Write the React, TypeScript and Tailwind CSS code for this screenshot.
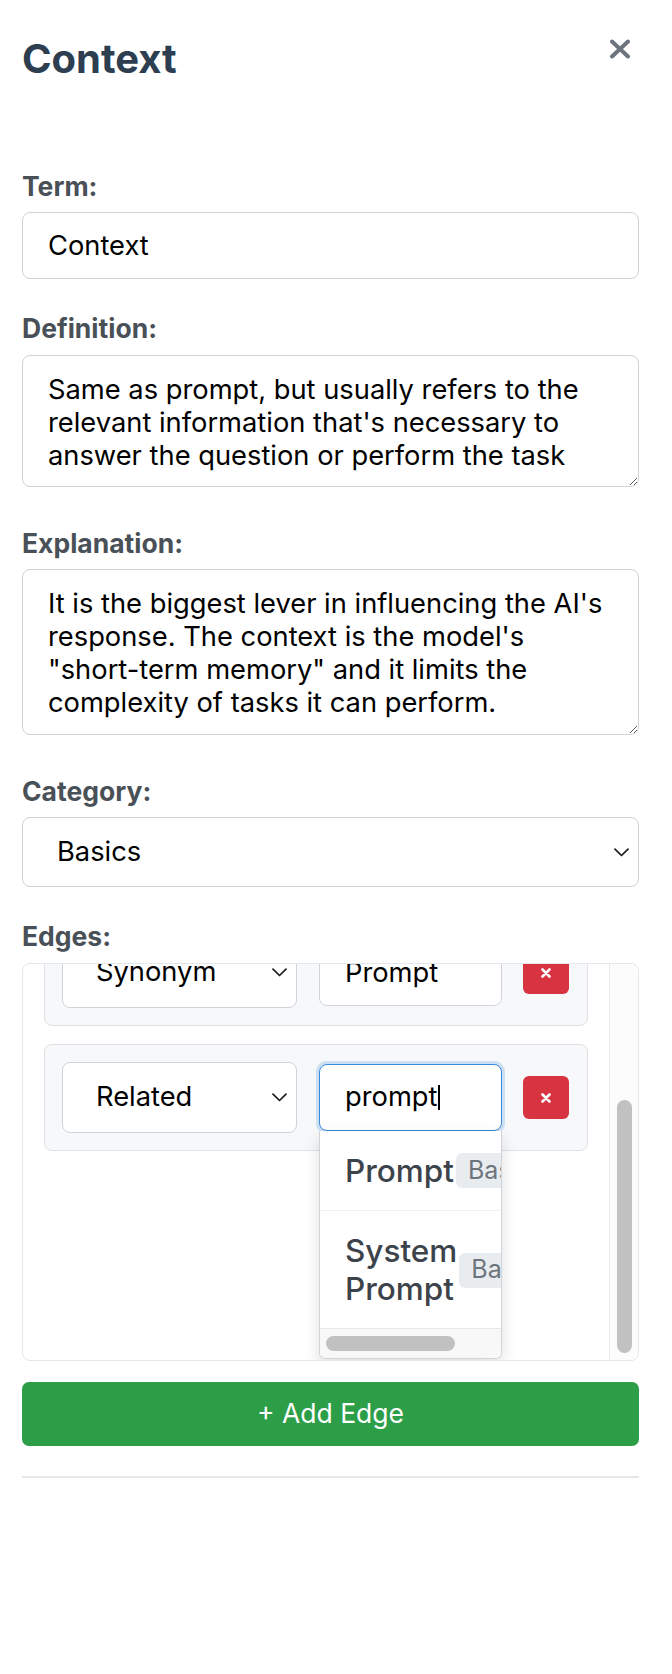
import React from "react";

const Chevron = () => (
  <svg width="15" height="9" viewBox="0 0 15 9" fill="none" className="shrink-0">
    <path d="M1 1.2l6.5 6.3L14 1.2" stroke="#1c1c1c" strokeWidth="1.7" strokeLinecap="round" strokeLinejoin="round" />
  </svg>
);

const SmallX = () => (
  <svg width="10" height="10" viewBox="0 0 10 10" fill="none">
    <path d="M1.5 1.5l7 7M8.5 1.5l-7 7" stroke="#ffffff" strokeWidth="2.6" strokeLinecap="round" />
  </svg>
);

function Label({ children }: { children: React.ReactNode }) {
  return <div className="h-[30px] text-[26.5px] leading-[30px] font-bold text-[#495057]">{children}</div>;
}

function EdgeSelect({ value }: { value: string }) {
  return (
    <div className="w-[235px] h-[71px] shrink-0 bg-white border border-[#ced4da] rounded-[8px] flex items-center justify-between pl-[33px] pr-[9px] text-[27.3px] text-black">
      <span>{value}</span>
      <Chevron />
    </div>
  );
}

function DeleteBtn() {
  return (
    <button className="w-[46px] h-[43px] shrink-0 rounded-[6px] bg-[#d73341] flex items-center justify-center">
      <SmallX />
    </button>
  );
}

function Badge() {
  return (
    <span className="ml-[2px] shrink-0 whitespace-nowrap h-[35px] px-[12px] rounded-[6px] bg-[#e9ecef] text-[#6c757d] text-[25px] flex items-center">
      Basics
    </span>
  );
}

export default function App() {
  return (
    <div className="w-[672px] min-h-[1674px] bg-white pl-[22px] pr-[33px] pt-[36px] font-[Inter,sans-serif]">
      <div className="flex justify-between items-start">
        <h2 className="text-[40px] leading-[46px] font-bold text-[#2c3e50]">Context</h2>
        <button className="mt-[3px] mr-[8px]">
          <svg width="22" height="20" viewBox="0 0 22 20" fill="none">
            <path d="M3 2.5l16 15M19 2.5l-16 15" stroke="#6c757d" strokeWidth="4" strokeLinecap="round" />
          </svg>
        </button>
      </div>

      <div className="mt-[89px]">
        <Label>Term:</Label>
        <input
          readOnly
          value="Context"
          className="mt-[11px] block w-full h-[67px] border border-[#ced4da] rounded-[8px] pl-[25px] text-[27.3px] text-black outline-none"
        />
      </div>

      <div className="mt-[34px]">
        <Label>Definition:</Label>
        <textarea
          readOnly
          defaultValue="Same as prompt, but usually refers to the relevant information that's necessary to answer the question or perform the task"
          className="mt-[12px] block w-full h-[132px] border border-[#ced4da] rounded-[8px] pl-[25px] pr-[25px] pt-[17px] text-[27.3px] leading-[33px] text-black outline-none"
        />
      </div>

      <div className="mt-[41px]">
        <Label>Explanation:</Label>
        <textarea
          readOnly
          defaultValue={'It is the biggest lever in influencing the AI\'s response. The context is the model\'s "short-term memory" and it limits the complexity of tasks it can perform.'}
          className="mt-[11px] block w-full h-[166px] border border-[#ced4da] rounded-[8px] pl-[25px] pr-[25px] pt-[17px] text-[27.3px] leading-[33px] text-black outline-none"
        />
      </div>

      <div className="mt-[41px]">
        <Label>Category:</Label>
        <div className="mt-[11px] h-[70px] border border-[#ced4da] rounded-[8px] flex items-center justify-between pl-[34px] pr-[9px] text-[27.3px] text-black">
          <span>Basics</span>
          <Chevron />
        </div>
      </div>

      <div className="mt-[34px]">
        <Label>Edges:</Label>
        <div className="mt-[12px] h-[398px] border border-[#e3e6ea] rounded-[8px] flex overflow-hidden">
          <div className="flex-1 overflow-hidden">
            <div className="-mt-[66px] pt-[21px] pl-[21px] pr-[21px] flex flex-col gap-[18px]">
              <div className="h-[107px] bg-[#f7f8fa] border border-[#dde1e5] rounded-[8px] px-[17px] flex items-center">
                <EdgeSelect value="Synonym" />
                <input
                  readOnly
                  value="Prompt"
                  className="ml-[22px] w-[183px] h-[67px] shrink-0 bg-white border border-[#ced4da] rounded-[8px] pl-[25px] text-[27.3px] text-black outline-none"
                />
                <div className="ml-[21px]">
                  <DeleteBtn />
                </div>
              </div>
              <div className="h-[107px] bg-[#f7f8fa] border border-[#dde1e5] rounded-[8px] px-[17px] flex items-center">
                <EdgeSelect value="Related" />
                <div className="ml-[22px] relative w-[183px] h-[67px] shrink-0">
                  <div className="w-full h-full bg-white border-[1.5px] border-[#3a8ad8] rounded-[8px] shadow-[0_0_0_3px_rgba(58,138,216,0.22)] flex items-center pl-[25px] text-[27.3px] text-black">
                    <span>prompt</span>
                    <span className="ml-[1px] w-[1.5px] h-[25px] bg-black" />
                  </div>
                  <div className="absolute left-0 top-full z-10 w-[183px] h-[228px] bg-white border border-t-0 border-[#ced4da] rounded-b-[6px] shadow-[0_6px_16px_rgba(0,0,0,0.13)] flex flex-col overflow-hidden">
                    <div className="overflow-hidden">
                      <div className="h-[80px] flex items-center pl-[25px] border-b border-[#f0f1f2]">
                        <span className="text-[31.5px] leading-[38px] font-medium text-[#3d434a]">Prompt</span>
                        <Badge />
                      </div>
                      <div className="h-[118px] flex items-center pl-[25px]">
                        <span className="text-[31.5px] leading-[38px] font-medium text-[#3d434a]">System Prompt</span>
                        <Badge />
                      </div>
                    </div>
                    <div className="h-[30px] border-t border-[#e6e6e6] bg-[#f8f8f8] pl-[6px] pt-[7px]">
                      <div className="w-[129px] h-[15px] rounded-full bg-[#c1c1c1]" />
                    </div>
                  </div>
                </div>
                <div className="ml-[21px]">
                  <DeleteBtn />
                </div>
              </div>
            </div>
          </div>
          <div className="w-[29px] shrink-0 border-l border-[#e8e8e8] bg-[#fcfcfc] pt-[136px] pb-[7px] flex justify-center">
            <div className="w-[15px] h-full rounded-full bg-[#c1c1c1]" />
          </div>
        </div>
      </div>

      <button className="mt-[21px] w-full h-[64px] rounded-[7px] bg-[#2c9e48] text-white text-[26.5px]">+ Add Edge</button>

      <hr className="mt-[30px] border-0 border-t-2 border-[#e5e7eb]" />
    </div>
  );
}
